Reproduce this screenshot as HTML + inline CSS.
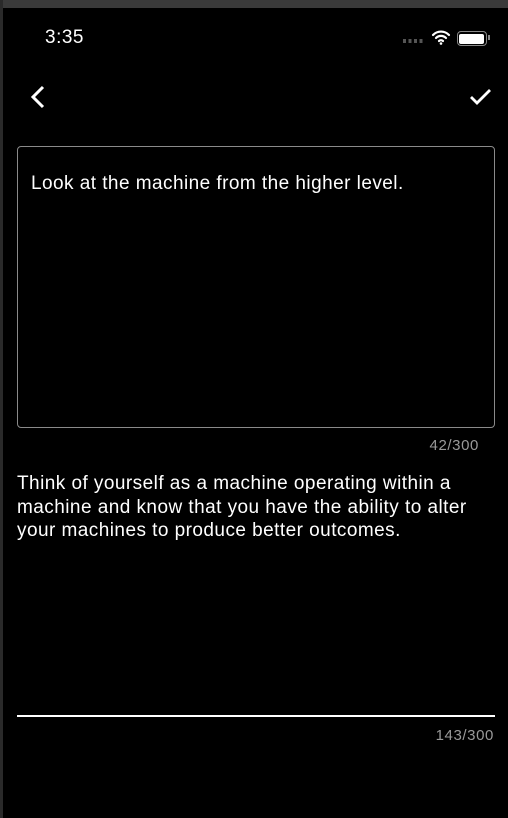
<!DOCTYPE html>
<html><head><style>
body{margin:0;width:508px;height:818px;background:#000;position:relative;overflow:hidden;font-family:"Liberation Sans",sans-serif;color:#fff}
.a{position:absolute}
</style></head><body>
<div class="a" style="left:0;top:0;width:508px;height:8px;background:#3a3a3a"></div>
<div class="a" style="left:0;top:0;width:3px;height:818px;background:#2a2a2a"></div>
<div class="a" style="left:45px;top:27px;font-size:19px;letter-spacing:0.5px">3:35</div>
<div class="a" style="left:403px;top:39px;width:22px;height:4px;background:repeating-linear-gradient(90deg,#555 0 3px,transparent 3px 5.5px)"></div>
<svg class="a" style="left:431px;top:29px" width="20" height="16" viewBox="0 0 20 16"><path d="M2 6a11 11 0 0 1 16 0M5 9a7 7 0 0 1 10 0M8 12a3 3 0 0 1 4 0" stroke="#fff" stroke-width="2.2" fill="none" stroke-linecap="round"/><circle cx="10" cy="14.5" r="1.3" fill="#fff"/></svg>
<div class="a" style="left:457px;top:31px;width:28px;height:13px;border:1.5px solid #888;border-radius:4px"></div>
<div class="a" style="left:459px;top:33.5px;width:25px;height:10px;background:#fff;border-radius:2px"></div>
<div class="a" style="left:488px;top:35px;width:2px;height:5px;background:#888"></div>
<svg class="a" style="left:28px;top:84px" width="20" height="26"><path d="M15 3L5 13l10 10" stroke="#fff" stroke-width="3" fill="none"/></svg>
<svg class="a" style="left:468px;top:86px" width="26" height="22"><path d="M3 11l6 6L22 4" stroke="#fff" stroke-width="2.8" fill="none"/></svg>
<div class="a" style="left:17px;top:146px;width:476px;height:280px;border:1px solid #8a8a8a;border-radius:4px"></div>
<div class="a" style="left:31px;top:173px;font-size:19px;letter-spacing:0.45px">Look at the machine from the higher level.</div>
<div class="a" style="right:29px;top:437px;font-size:15px;color:#999;letter-spacing:0.6px">42/300</div>
<div class="a" style="left:17px;top:472px;width:465px;font-size:19px;letter-spacing:0.45px;line-height:23.7px">Think of yourself as a machine operating within a machine and know that you have the ability to alter your machines to produce better outcomes.</div>
<div class="a" style="left:17px;top:715px;width:478px;height:2px;background:#fff"></div>
<div class="a" style="right:14px;top:727px;font-size:15px;color:#999;letter-spacing:0.6px">143/300</div>
</body></html>
